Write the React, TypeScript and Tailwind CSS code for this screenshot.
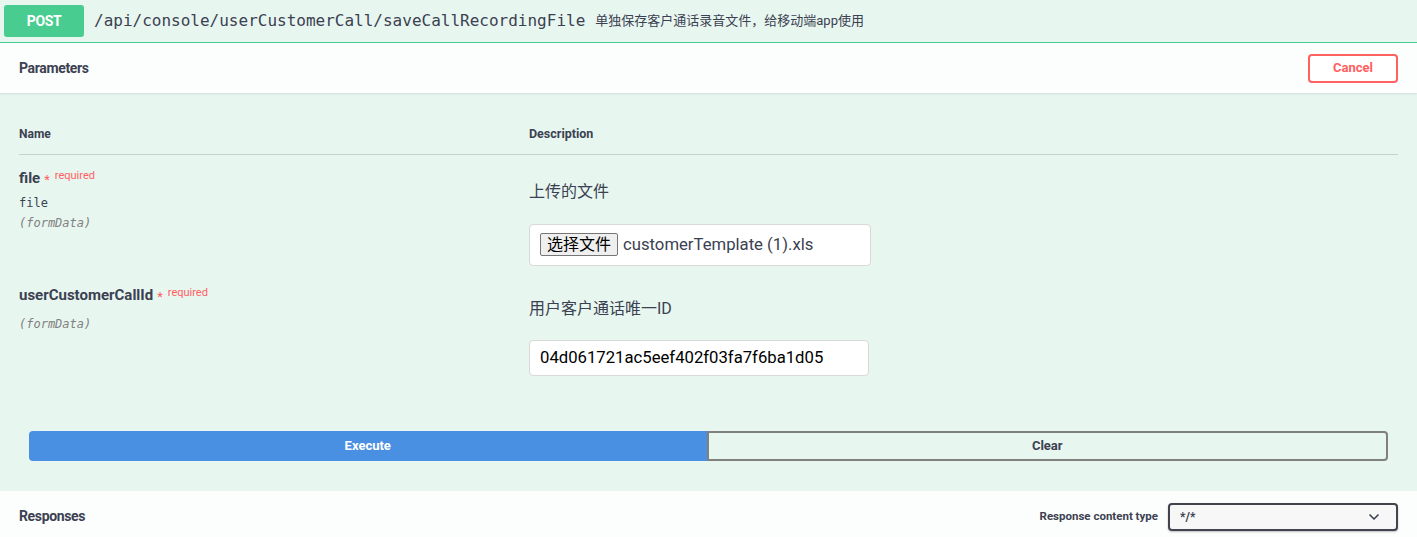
import { ChevronDown } from "lucide-react";

const sans = "font-['Roboto','Noto_Sans_CJK_SC',sans-serif]";
const mono = "font-['DejaVu_Sans_Mono','Liberation_Mono',monospace]";

function Required() {
    return (
        <span className="ml-1 inline-flex items-center font-normal text-[#ff6060]">
            <span className="text-[13px] leading-none relative top-[1px]">*</span>
            <span className="ml-[5px] text-[11px] leading-none relative -top-[3px]">required</span>
        </span>
    );
}

export default function App() {
    return (
        <div className={`${sans} w-[1417px] h-[537px] overflow-hidden bg-white text-[#3b4151]`}>
            <div className="bg-[#e8f6f0]">
                {/* summary */}
                <div className="flex h-[43px] items-center border-b border-[#49cc90] pl-1">
                    <span className="flex h-[32px] w-[80px] items-center justify-center rounded-[3px] bg-[#49cc90] text-[14px] font-bold text-white tracking-tight">
                        POST
                    </span>
                    <span className={`${mono} ml-[10px] text-[16px] text-[#3b4151]`}>
                        /api/console/userCustomerCall/saveCallRecordingFile
                    </span>
                    <span className="ml-[10px] text-[13px] text-[#3b4151]">
                        单独保存客户通话录音文件，给移动端app使用
                    </span>
                </div>

                {/* parameters header */}
                <div className="flex h-[50px] items-center justify-between bg-[#fcfefd] px-[19px] shadow-[0_1px_2px_rgba(0,0,0,0.1)]">
                    <span className="text-[14px] font-bold tracking-tight">Parameters</span>
                    <button className="h-[29px] w-[90px] rounded-[4px] border-2 border-[#ff6060] bg-white text-[13px] font-bold text-[#ff6060]">
                        Cancel
                    </button>
                </div>

                {/* table */}
                <div className="px-[19px] pt-[32px]">
                    <div className="grid grid-cols-[510px_1fr] border-b border-[#c9d0cd] pb-[10px] text-[12px] font-bold">
                        <span>Name</span>
                        <span className="text-[12.5px]">Description</span>
                    </div>

                    <div className="grid grid-cols-[510px_1fr]">
                        <div className="pt-[12px]">
                            <div className="flex items-center text-[15px] font-bold">
                                file
                                <Required />
                            </div>
                            <div className={`${mono} mt-[5px] text-[12px]`}>file</div>
                            <div className={`${mono} mt-[2px] text-[12px] italic text-[#808080]`}>(formData)</div>
                        </div>
                        <div className="pt-[25px]">
                            <div className="text-[16px]">上传的文件</div>
                            <div className="mt-[20px] flex h-[42px] w-[342px] items-center rounded-[4px] border border-[#d9d9d9] bg-white px-[10px]">
                                <span className="flex h-[23px] items-center rounded-[2px] border border-[#767676] bg-[#efefef] px-[6px] text-[16px] text-black">
                                    选择文件
                                </span>
                                <span className="ml-[5px] text-[16.7px] text-[#3b4151]">customerTemplate (1).xls</span>
                            </div>
                        </div>

                        <div className="pt-[18px]">
                            <div className="flex items-center text-[15px] font-bold">
                                userCustomerCallId
                                <Required />
                            </div>
                            <div className={`${mono} mt-[9px] text-[12px] italic text-[#808080]`}>(formData)</div>
                        </div>
                        <div className="pt-[31px]">
                            <div className="text-[16px]">用户客户通话唯一ID</div>
                            <div className="mt-[19px] flex h-[36px] w-[340px] items-center rounded-[4px] border border-[#d9d9d9] bg-white px-[10px] text-[16.7px] text-black">
                                04d061721ac5eef402f03fa7f6ba1d05
                            </div>
                        </div>
                    </div>
                </div>

                {/* execute / clear */}
                <div className="flex px-[29px] pt-[55px] pb-[30px]">
                    <button className="h-[30px] flex-1 rounded-l-[4px] bg-[#4990e2] text-[13px] font-bold text-white">
                        Execute
                    </button>
                    <button className="h-[30px] flex-1 rounded-r-[4px] border-2 border-[#808080] bg-transparent text-[13px] font-bold text-[#3b4151]">
                        Clear
                    </button>
                </div>
            </div>

            {/* responses */}
            <div className="flex h-[46px] items-center justify-between bg-[#fcfefd] px-[19px] pt-[6px]">
                <span className="text-[14px] font-bold tracking-tight">Responses</span>
                <div className="flex items-center">
                    <span className="mr-[10px] text-[11.5px] font-bold">Response content type</span>
                    <div className="flex h-[28px] w-[230px] items-center justify-between rounded-[4px] border-2 border-[#41444e] bg-[#f7f7f7] pl-[10px] pr-[14px] shadow-[0_1px_2px_rgba(0,0,0,0.25)]">
                        <span className="text-[12px] font-bold">*/*</span>
                        <ChevronDown className="h-4 w-4" strokeWidth={2.5} />
                    </div>
                </div>
            </div>
        </div>
    );
}
